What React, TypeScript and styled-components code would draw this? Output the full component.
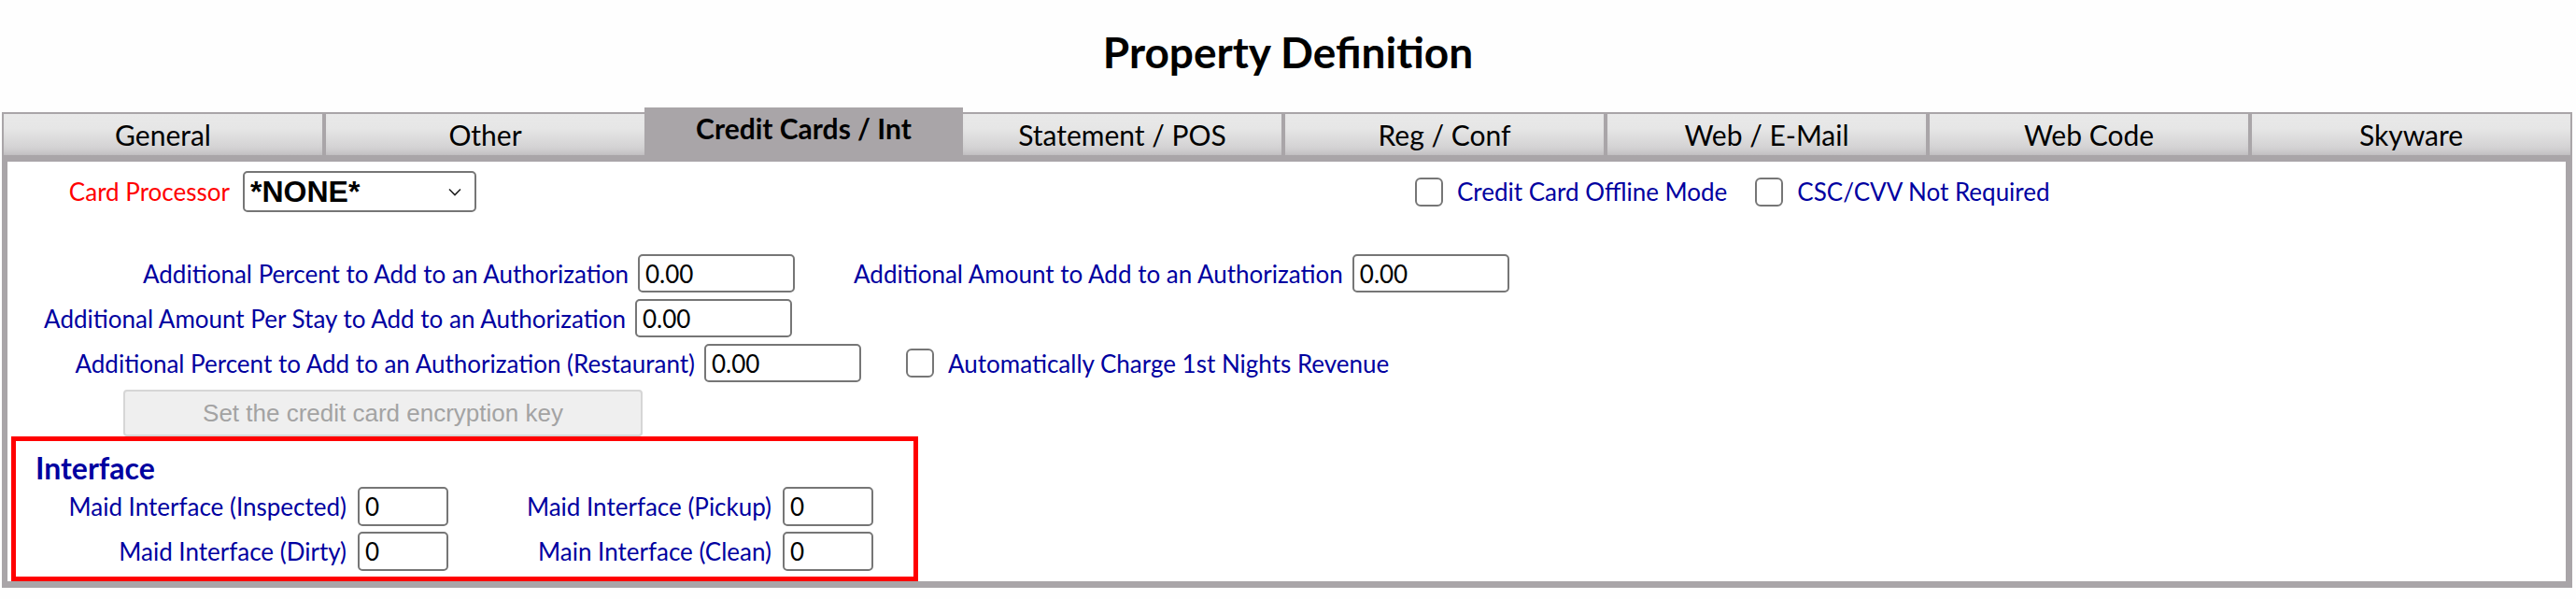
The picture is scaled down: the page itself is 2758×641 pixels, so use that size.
import styled, { createGlobalStyle } from "styled-components";

const GlobalStyle = createGlobalStyle`
  html, body {
    margin: 0;
    padding: 0;
    background: #fefefe;
  }
  body {
    font-family: Lato, "Noto Sans", sans-serif;
    color: #000;
  }
`;

const TABS = [
  "General",
  "Other",
  "Credit Cards / Int",
  "Statement / POS",
  "Reg / Conf",
  "Web / E-Mail",
  "Web Code",
  "Skyware",
];

const ACTIVE_TAB = "Credit Cards / Int";

const Chevron = () => (
  <svg width="14" height="9" viewBox="0 0 14 9" fill="none">
    <path d="M1 1.5 L7 7.5 L13 1.5" stroke="#222" strokeWidth="1.6" />
  </svg>
);

export default function App() {
  return (
    <Page>
      <GlobalStyle />
      <Title>Property Definition</Title>
      <Frame>
        <TabBar>
          {TABS.map((t) => (
            <Tab key={t} $active={t === ACTIVE_TAB}>
              {t}
            </Tab>
          ))}
        </TabBar>
        <Panel>
          <ProcessorRow>
            <ProcessorLabel>Card Processor</ProcessorLabel>
            <SelectBox>
              <span>*NONE*</span>
              <Chevron />
            </SelectBox>
            <CheckGroup>
              <CheckItem>
                <CheckBox type="checkbox" />
                <CheckLabel>Credit Card Offline Mode</CheckLabel>
              </CheckItem>
              <CheckItem>
                <CheckBox type="checkbox" />
                <CheckLabel>CSC/CVV Not Required</CheckLabel>
              </CheckItem>
            </CheckGroup>
          </ProcessorRow>

          <Fields>
            <FieldRow>
              <FieldLabel $width={665}>
                Additional Percent to Add to an Authorization
              </FieldLabel>
              <TextInput readOnly value="0.00" />
              <SideLabel>Additional Amount to Add to an Authorization</SideLabel>
              <TextInput readOnly value="0.00" />
            </FieldRow>
            <FieldRow>
              <FieldLabel $width={662}>
                Additional Amount Per Stay to Add to an Authorization
              </FieldLabel>
              <TextInput readOnly value="0.00" />
            </FieldRow>
            <FieldRow>
              <FieldLabel $width={736}>
                Additional Percent to Add to an Authorization (Restaurant)
              </FieldLabel>
              <TextInput readOnly value="0.00" />
              <RowCheck>
                <CheckBox type="checkbox" />
                <CheckLabel>Automatically Charge 1st Nights Revenue</CheckLabel>
              </RowCheck>
            </FieldRow>
          </Fields>

          <KeyButton disabled>Set the credit card encryption key</KeyButton>

          <InterfaceBox>
            <BoxHeading>Interface</BoxHeading>
            <InterfaceGrid>
              <GridLabel>Maid Interface (Inspected)</GridLabel>
              <SmallInput readOnly value="0" />
              <GridLabel>Maid Interface (Pickup)</GridLabel>
              <SmallInput readOnly value="0" />
              <GridLabel>Maid Interface (Dirty)</GridLabel>
              <SmallInput readOnly value="0" />
              <GridLabel>Main Interface (Clean)</GridLabel>
              <SmallInput readOnly value="0" />
            </InterfaceGrid>
          </InterfaceBox>
        </Panel>
      </Frame>
    </Page>
  );
}

const Page = styled.div`
  width: 2758px;
`;

const Title = styled.h1`
  box-sizing: border-box;
  height: 120px;
  margin: 0;
  padding-top: 27px;
  font-size: 46px;
  line-height: 58px;
  font-weight: 700;
  text-align: center;
`;

const Frame = styled.div`
  width: 2752px;
  margin-left: 2px;
`;

const TabBar = styled.div`
  display: flex;
  gap: 4px;
  padding: 2px 2px 7px 2px;
  background: #a9a5a8;
`;

const Tab = styled.div<{ $active: boolean }>`
  flex: 1;
  height: 44px;
  display: flex;
  align-items: center;
  justify-content: center;
  font-size: 30px;
  line-height: 1;
  color: #000;
  font-weight: ${(p) => (p.$active ? 700 : 400)};
  background: ${(p) =>
    p.$active
      ? "#a9a5a8"
      : "linear-gradient(to bottom, #e9e9e9 0%, #e6e6e6 35%, #d6d5d6 75%, #cdcbcd 100%)"};
  box-shadow: ${(p) =>
    p.$active ? "none" : "inset 0 -6px 10px -6px rgba(0, 0, 0, 0.12)"};
  margin: ${(p) => (p.$active ? "-7px -4px 0" : "0")};
  padding-bottom: ${(p) => (p.$active ? "4px" : "0")};
`;

const Panel = styled.div`
  background: #fff;
  border: solid #a9a5a8;
  border-width: 0 7px 7px 6px;
  padding-top: 10px;
`;

const ProcessorRow = styled.div`
  display: flex;
  align-items: center;
  height: 44px;
`;

const ProcessorLabel = styled.span`
  width: 238px;
  text-align: right;
  font-size: 26px;
  color: #ff0000;
`;

const SelectBox = styled.div`
  box-sizing: border-box;
  width: 250px;
  height: 44px;
  margin-left: 14px;
  display: flex;
  align-items: center;
  justify-content: space-between;
  padding: 0 14px 0 6px;
  border: 2px solid #767676;
  border-radius: 5px;
  font-family: "Liberation Sans", Arial, sans-serif;
  font-weight: 700;
  font-size: 32px;
`;

const CheckGroup = styled.div`
  display: flex;
  align-items: center;
  gap: 30px;
  margin-left: 1005px;
`;

const CheckItem = styled.label`
  display: flex;
  align-items: center;
  gap: 15px;
`;

const RowCheck = styled(CheckItem)`
  margin-left: 48px;
`;

const CheckBox = styled.input`
  appearance: none;
  box-sizing: border-box;
  width: 30px;
  height: 31px;
  margin: 0;
  border: 2px solid #767676;
  border-radius: 6px;
  background: #fff;
`;

const CheckLabel = styled.span`
  font-size: 26px;
  color: #0000a0;
  white-space: nowrap;
`;

const Fields = styled.div`
  display: flex;
  flex-direction: column;
  gap: 7px;
  margin-top: 45px;
`;

const FieldRow = styled.div`
  display: flex;
  align-items: center;
`;

const FieldLabel = styled.span<{ $width: number }>`
  width: ${(p) => p.$width}px;
  text-align: right;
  font-size: 26px;
  color: #0000a0;
  white-space: nowrap;
`;

const SideLabel = styled.span`
  margin-left: 63px;
  font-size: 26px;
  color: #0000a0;
  white-space: nowrap;
`;

const TextInput = styled.input`
  box-sizing: border-box;
  width: 168px;
  height: 41px;
  margin-left: 10px;
  padding: 0 6px;
  border: 2px solid #767676;
  border-radius: 5px;
  font-family: Lato, sans-serif;
  font-size: 26px;
  color: #000;
  background: #fff;
  outline: none;
`;

const KeyButton = styled.button`
  box-sizing: border-box;
  display: block;
  width: 556px;
  height: 50px;
  margin: 8px 0 0 124px;
  border: 2px solid #d6d6d6;
  border-radius: 4px;
  background: #efefef;
  color: #a3a3a3;
  font-family: "Liberation Sans", Arial, sans-serif;
  font-size: 26px;
`;

const InterfaceBox = styled.div`
  box-sizing: border-box;
  width: 971px;
  height: 155px;
  margin-left: 4px;
  border: 5px solid #ff0000;
  padding: 11px 0 0 21px;
`;

const BoxHeading = styled.div`
  font-size: 32px;
  font-weight: 700;
  line-height: 36px;
  color: #0000a0;
`;

const InterfaceGrid = styled.div`
  display: grid;
  grid-template-columns: 333px 97px 334px 97px;
  column-gap: 12px;
  row-gap: 6px;
  align-items: center;
  margin-top: 2px;
`;

const GridLabel = styled.span`
  text-align: right;
  font-size: 26px;
  color: #0000a0;
  white-space: nowrap;
`;

const SmallInput = styled(TextInput)`
  width: 97px;
  height: 42px;
  margin-left: 0;
`;
